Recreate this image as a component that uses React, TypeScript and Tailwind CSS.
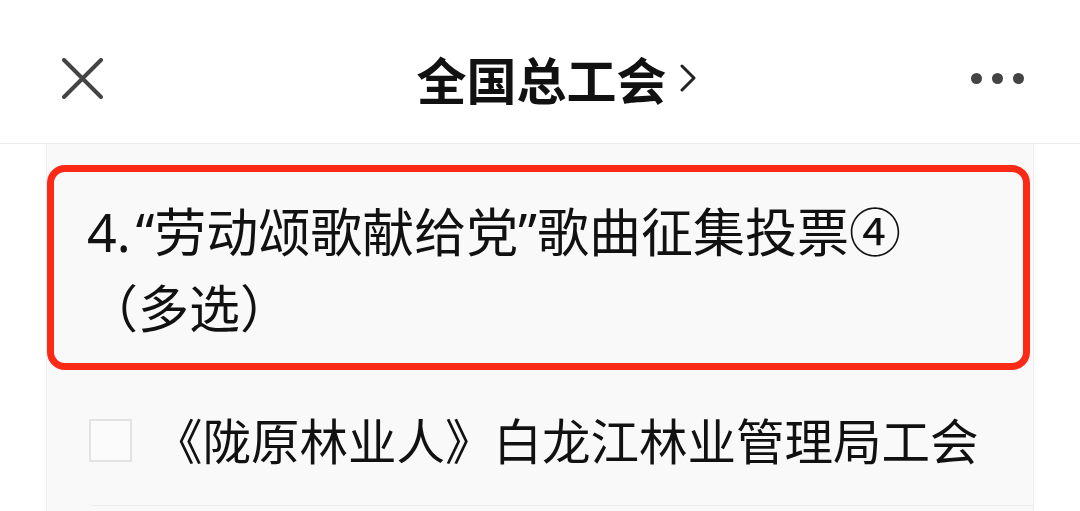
import React from "react";

const font = { fontFamily: '"Noto Sans CJK SC", "Noto Sans", sans-serif' };
const latinFirst = { fontFamily: '"Noto Sans", "Noto Sans CJK SC", sans-serif' };

export default function App() {
  return (
    <div className="w-[1080px] h-[511px] bg-white overflow-hidden flex flex-col text-[#111]" style={font}>
      <header className="h-[144px] shrink-0 border-b border-[#ececec] grid grid-cols-[1fr_auto_1fr] items-center pt-[13px]">
        <div className="pl-[62px] flex items-center">
          <svg width="41" height="41" viewBox="0 0 41 41" fill="none" stroke="#444" strokeWidth="4" strokeLinecap="round">
            <path d="M2 2 L39 39 M39 2 L2 39" />
          </svg>
        </div>
        <div className="flex items-center">
          <span className="w-[33px]" />
          <span className="text-[50px] leading-[60px] font-bold">全国总工会</span>
          <svg className="ml-[13px]" width="17" height="28" viewBox="0 0 17 28" fill="none" stroke="#222" strokeWidth="3" strokeLinecap="round" strokeLinejoin="round">
            <path d="M2 2 L14 14 L2 26" />
          </svg>
        </div>
        <div className="flex items-center justify-end gap-[10px] pr-[56px]">
          <span className="w-[11px] h-[11px] rounded-full bg-[#444]" />
          <span className="w-[11px] h-[11px] rounded-full bg-[#444]" />
          <span className="w-[11px] h-[11px] rounded-full bg-[#444]" />
        </div>
      </header>
      <main className="ml-[46px] w-[988px] flex-1 bg-[#f9f9f9] border-x border-[#eeeeee] flex flex-col">
        <div className="mt-[21px] w-[983px] h-[205px] border-[7px] border-[#fb2a17] rounded-[18px] pl-[33px] pt-[22px] text-[52px] leading-[76px] text-[#111]" style={latinFirst}>
          <div>
            <span className="mr-[5px]">4.</span>“劳动颂歌献给党”歌曲征集投票④
          </div>
          <div className="text-[51px]">（多选）</div>
        </div>
        <div className="mt-[20px] h-[100px] flex items-center pl-[42px] gap-[22px]">
          <span className="w-[43px] h-[43px] border-2 border-[#e3e3e3] bg-[#fbfbfb] shrink-0" />
          <span className="text-[48.5px] leading-[60px] text-[#111] -mt-[2px]">《陇原林业人》白龙江林业管理局工会</span>
        </div>
        <div className="mt-[15px] ml-[45px] border-t border-[#ececec]" />
      </main>
    </div>
  );
}
